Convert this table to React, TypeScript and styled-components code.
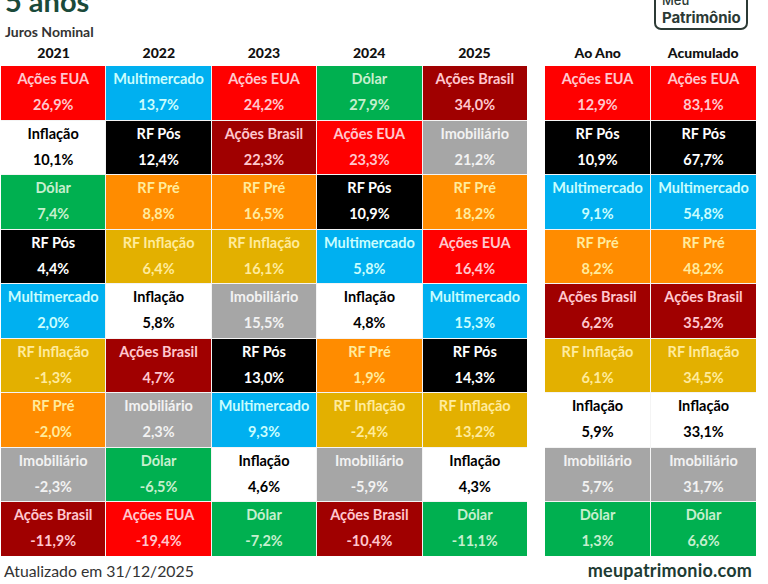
import React from "react";
import styled, { createGlobalStyle } from "styled-components";

const Global = createGlobalStyle`
  html, body { margin: 0; padding: 0; background: #ffffff; }
  body { font-family: "Lato", "Liberation Sans", sans-serif; }
`;

type Asset =
  | "Ações EUA"
  | "Ações Brasil"
  | "Multimercado"
  | "Dólar"
  | "RF Pré"
  | "RF Pós"
  | "RF Inflação"
  | "Imobiliário"
  | "Inflação";

const palette: Record<Asset, { bg: string; fg: string }> = {
  "Ações EUA": { bg: "#ff0000", fg: "#ffc7ce" },
  "Ações Brasil": { bg: "#a00000", fg: "#ffc7ce" },
  Multimercado: { bg: "#00b0f0", fg: "#c9fdfd" },
  "Dólar": { bg: "#00b050", fg: "#c6efce" },
  "RF Pré": { bg: "#ff8c00", fg: "#ffeb9c" },
  "RF Pós": { bg: "#000000", fg: "#ffffff" },
  "RF Inflação": { bg: "#e3b000", fg: "#ffeb9c" },
  "Imobiliário": { bg: "#a6a6a6", fg: "#f2f2f2" },
  "Inflação": { bg: "#ffffff", fg: "#000000" },
};

type Entry = [Asset, string];

const years: { title: string; items: Entry[] }[] = [
  {
    title: "2021",
    items: [
      ["Ações EUA", "26,9%"],
      ["Inflação", "10,1%"],
      ["Dólar", "7,4%"],
      ["RF Pós", "4,4%"],
      ["Multimercado", "2,0%"],
      ["RF Inflação", "-1,3%"],
      ["RF Pré", "-2,0%"],
      ["Imobiliário", "-2,3%"],
      ["Ações Brasil", "-11,9%"],
    ],
  },
  {
    title: "2022",
    items: [
      ["Multimercado", "13,7%"],
      ["RF Pós", "12,4%"],
      ["RF Pré", "8,8%"],
      ["RF Inflação", "6,4%"],
      ["Inflação", "5,8%"],
      ["Ações Brasil", "4,7%"],
      ["Imobiliário", "2,3%"],
      ["Dólar", "-6,5%"],
      ["Ações EUA", "-19,4%"],
    ],
  },
  {
    title: "2023",
    items: [
      ["Ações EUA", "24,2%"],
      ["Ações Brasil", "22,3%"],
      ["RF Pré", "16,5%"],
      ["RF Inflação", "16,1%"],
      ["Imobiliário", "15,5%"],
      ["RF Pós", "13,0%"],
      ["Multimercado", "9,3%"],
      ["Inflação", "4,6%"],
      ["Dólar", "-7,2%"],
    ],
  },
  {
    title: "2024",
    items: [
      ["Dólar", "27,9%"],
      ["Ações EUA", "23,3%"],
      ["RF Pós", "10,9%"],
      ["Multimercado", "5,8%"],
      ["Inflação", "4,8%"],
      ["RF Pré", "1,9%"],
      ["RF Inflação", "-2,4%"],
      ["Imobiliário", "-5,9%"],
      ["Ações Brasil", "-10,4%"],
    ],
  },
  {
    title: "2025",
    items: [
      ["Ações Brasil", "34,0%"],
      ["Imobiliário", "21,2%"],
      ["RF Pré", "18,2%"],
      ["Ações EUA", "16,4%"],
      ["Multimercado", "15,3%"],
      ["RF Pós", "14,3%"],
      ["RF Inflação", "13,2%"],
      ["Inflação", "4,3%"],
      ["Dólar", "-11,1%"],
    ],
  },
];

const summary: { title: string; items: Entry[] }[] = [
  {
    title: "Ao Ano",
    items: [
      ["Ações EUA", "12,9%"],
      ["RF Pós", "10,9%"],
      ["Multimercado", "9,1%"],
      ["RF Pré", "8,2%"],
      ["Ações Brasil", "6,2%"],
      ["RF Inflação", "6,1%"],
      ["Inflação", "5,9%"],
      ["Imobiliário", "5,7%"],
      ["Dólar", "1,3%"],
    ],
  },
  {
    title: "Acumulado",
    items: [
      ["Ações EUA", "83,1%"],
      ["RF Pós", "67,7%"],
      ["Multimercado", "54,8%"],
      ["RF Pré", "48,2%"],
      ["Ações Brasil", "35,2%"],
      ["RF Inflação", "34,5%"],
      ["Inflação", "33,1%"],
      ["Imobiliário", "31,7%"],
      ["Dólar", "6,6%"],
    ],
  },
];

const Page = styled.div`
  width: 768px;
  height: 584px;
  overflow: hidden;
  display: flex;
  flex-direction: column;
  background: #ffffff;
`;

const Header = styled.header`
  height: 42px;
  display: flex;
  justify-content: space-between;
  align-items: flex-start;
  padding: 0 20px 0 5px;
`;

const TitleBlock = styled.div`
  margin-top: -13px;
  display: flex;
  flex-direction: column;
`;

const Title = styled.h1`
  margin: 0;
  font-family: "Lato", sans-serif;
  font-weight: 700;
  font-size: 29px;
  line-height: 28px;
  color: #1b4a3a;
`;

const Subtitle = styled.div`
  margin-top: 9px;
  font-family: "Lato", sans-serif;
  font-weight: 700;
  font-size: 14px;
  line-height: 16px;
  color: #333333;
`;

const Logo = styled.div`
  margin-top: -11px;
  width: 94px;
  box-sizing: border-box;
  border: 2px solid #2c3a35;
  border-radius: 7px;
  padding: 2px 0 1px 6px;
  display: flex;
  flex-direction: column;
  font-family: "Inter", sans-serif;
  color: #2c3a35;
`;

const LogoSmall = styled.span`
  font-size: 13px;
  line-height: 14px;
  font-weight: 500;
`;

const LogoBig = styled.span`
  margin-top: 2px;
  font-size: 15px;
  line-height: 18px;
  font-weight: 700;
  letter-spacing: -0.1px;
`;

const Tables = styled.div`
  display: flex;
  gap: 18px;
  padding-left: 1px;
`;

const Table = styled.div<{ $cols: number; $width: number }>`
  width: ${(p) => p.$width}px;
  display: grid;
  grid-template-columns: repeat(${(p) => p.$cols}, 1fr);
`;

const HeadCell = styled.div`
  height: 24px;
  box-sizing: border-box;
  padding-bottom: 4px;
  display: flex;
  align-items: center;
  justify-content: center;
  font-family: "Lato", sans-serif;
  font-weight: 900;
  font-size: 14px;
  color: #111111;
`;

const Body = styled.div<{ $cols: number }>`
  grid-column: 1 / -1;
  height: 490px;
  display: grid;
  grid-template-columns: repeat(${(p) => p.$cols}, 1fr);
  grid-template-rows: repeat(9, 1fr);
  grid-auto-flow: column;
  gap: 1px;
  background: #f4f4f4;
`;

const Cell = styled.div<{ $bg: string; $fg: string }>`
  background: ${(p) => p.$bg};
  color: ${(p) => p.$fg};
  display: flex;
  flex-direction: column;
  align-items: center;
  font-family: "Lato", sans-serif;
  font-weight: 700;
  font-size: 14.5px;
`;

const Label = styled.span`
  margin-top: 4px;
  line-height: 18px;
  white-space: nowrap;
`;

const Value = styled.span`
  margin-top: 8px;
  line-height: 18px;
`;

const Footer = styled.footer`
  flex: 1;
  display: flex;
  align-items: center;
  justify-content: space-between;
  padding: 0 16px 0 4px;
`;

const Updated = styled.span`
  font-family: "Lato", sans-serif;
  font-size: 15.8px;
  color: #333333;
`;

const Site = styled.span`
  font-family: "Lato", sans-serif;
  font-weight: 700;
  font-size: 18px;
  color: #1d3b33;
  letter-spacing: 0.2px;
`;

function RankTable({
  columns,
  width,
}: {
  columns: { title: string; items: Entry[] }[];
  width: number;
}) {
  return (
    <Table $cols={columns.length} $width={width}>
      {columns.map((c) => (
        <HeadCell key={c.title}>{c.title}</HeadCell>
      ))}
      <Body $cols={columns.length}>
        {columns.map((c) =>
          c.items.map(([asset, value], i) => (
            <Cell
              key={c.title + i}
              $bg={palette[asset].bg}
              $fg={palette[asset].fg}
            >
              <Label>{asset}</Label>
              <Value>{value}</Value>
            </Cell>
          ))
        )}
      </Body>
    </Table>
  );
}

export default function App() {
  return (
    <>
      <Global />
      <Page>
        <Header>
          <TitleBlock>
            <Title>5 anos</Title>
            <Subtitle>Juros Nominal</Subtitle>
          </TitleBlock>
          <Logo>
            <LogoSmall>Meu</LogoSmall>
            <LogoBig>Patrimônio</LogoBig>
          </Logo>
        </Header>
        <Tables>
          <RankTable columns={years} width={526} />
          <RankTable columns={summary} width={211} />
        </Tables>
        <Footer>
          <Updated>Atualizado em 31/12/2025</Updated>
          <Site>meupatrimonio.com</Site>
        </Footer>
      </Page>
    </>
  );
}
